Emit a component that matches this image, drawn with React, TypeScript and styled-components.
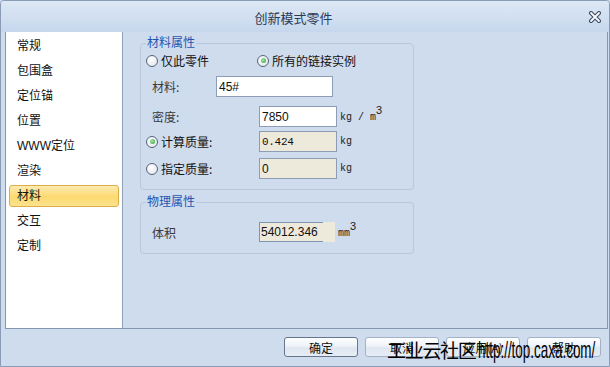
import React from "react";
import styled, { createGlobalStyle } from "styled-components";

const GlobalStyle = createGlobalStyle`
  html, body {
    margin: 0;
    padding: 0;
    background: #cfdcee;
  }
  body {
    font-family: "Noto Sans CJK SC", "Liberation Sans", sans-serif;
    font-size: 12px;
    color: #000;
  }
`;

const CJK = `"Noto Sans CJK SC", "Liberation Sans", sans-serif`;
const MONO = `"Liberation Mono", "Noto Sans CJK SC", monospace`;

const Window = styled.div`
  position: relative;
  width: 610px;
  height: 367px;
  box-sizing: border-box;
  border: 1px solid #8a9bb5;
  border-radius: 4px 4px 0 0;
  background: #cfdcee;
  overflow: hidden;
  display: flex;
  flex-direction: column;
`;

const TitleBar = styled.div`
  flex: none;
  height: 31px;
  display: flex;
  align-items: center;
  background: linear-gradient(#dde8f5, #c6d7ed);
`;

const Title = styled.div`
  flex: 1;
  text-align: center;
  font-family: ${CJK};
  font-size: 13px;
  color: #2b3a55;
  padding-top: 1px;
`;

const CloseButton = styled.div`
  flex: none;
  width: 18px;
  height: 18px;
  margin-right: 5px;
  display: flex;
  align-items: center;
  justify-content: center;
`;

const Content = styled.div`
  flex: none;
  height: 296px;
  margin: 0 1px 0 4px;
  display: flex;
  border: 1px solid #8496b2;
  border-top: none;
`;

const Sidebar = styled.ul`
  flex: none;
  width: 116px;
  margin: 0;
  padding: 3px 0 0;
  list-style: none;
  background: #fff;
  border-right: 1px solid #8e9fb7;
`;

const NavItem = styled.li<{ $active?: boolean }>`
  height: 22px;
  box-sizing: border-box;
  margin: 0 3px 3px;
  padding-left: 7px;
  line-height: 20px;
  font-family: "Liberation Sans", "Noto Sans CJK SC", sans-serif;
  font-size: 12px;
  color: #111;
  border-radius: 3px;
  border: 1px solid ${(p) => (p.$active ? "#dcae48" : "transparent")};
  background: ${(p) =>
    p.$active
      ? "linear-gradient(#fdeab0, #fcd96f 55%, #fde38f)"
      : "transparent"};
`;

const Main = styled.div`
  flex: 1;
  padding: 3px 0 0 17px;
`;

const Group = styled.fieldset<{ $top?: number; $bottom?: number }>`
  width: 274px;
  box-sizing: border-box;
  margin: ${(p) => p.$top ?? 0}px 0 0;
  padding: 0 5px ${(p) => p.$bottom ?? 10}px;
  min-width: 0;
  border: 1px solid #b7c7dd;
  border-radius: 4px;
`;

const Legend = styled.legend`
  padding: 0 1px 3px;
  line-height: 13px;
  font-family: ${CJK};
  font-size: 12px;
  color: #1f55b0;
`;

const Row = styled.div<{ $top?: number; $height?: number }>`
  display: flex;
  align-items: center;
  margin-top: ${(p) => p.$top ?? 0}px;
  height: ${(p) => p.$height ?? 21}px;
`;

const LabelCell = styled.div<{ $width: number; $indent?: boolean }>`
  flex: none;
  width: ${(p) => p.$width}px;
  box-sizing: border-box;
  padding-left: ${(p) => (p.$indent ? 6 : 0)}px;
  display: flex;
  align-items: center;
  font-family: ${CJK};
  font-size: 12px;
  color: ${(p) => (p.$indent ? "#3a3a3a" : "#111")};
`;

const Radio = styled.span<{ $checked?: boolean }>`
  flex: none;
  width: 12px;
  height: 12px;
  box-sizing: border-box;
  margin-right: 3px;
  border-radius: 50%;
  border: 1px solid #56657b;
  background: radial-gradient(circle at 40% 35%, #ffffff, #dde2ea);
  display: inline-flex;
  align-items: center;
  justify-content: center;

  &::after {
    content: "";
    display: ${(p) => (p.$checked ? "block" : "none")};
    width: 5px;
    height: 5px;
    border-radius: 50%;
    background: radial-gradient(circle at 40% 40%, #a6e8a2, #2f9d35);
  }
`;

const Field = styled.div<{ $width: number; $readonly?: boolean }>`
  flex: none;
  width: ${(p) => p.$width}px;
  height: 100%;
  box-sizing: border-box;
  padding-left: 2px;
  border: 1px solid #8d9db5;
  background: ${(p) => (p.$readonly ? "#eeeadb" : "#fff")};
  display: flex;
  align-items: center;
  font-family: "Liberation Sans", sans-serif;
  font-size: 12px;
  color: #111;
`;

const ReadValue = styled.span`
  font-family: ${MONO};
  font-size: 11px;
  letter-spacing: -0.3px;
`;

const VolumeField = styled.div`
  position: relative;
  flex: none;
  width: 76px;
  height: 100%;
  box-sizing: border-box;
  padding-left: 2px;
  background: #eeeadb;
  display: flex;
  align-items: center;
  font-family: "Liberation Sans", sans-serif;
  font-size: 12px;
  color: #111;

  &::before {
    content: "";
    position: absolute;
    left: 0;
    top: 0;
    bottom: 0;
    width: 63px;
    border: 1px solid #7f93b3;
    border-right: none;
  }
`;

const Unit = styled.span<{ $gap?: number }>`
  margin-left: ${(p) => p.$gap ?? 3}px;
  font-family: ${MONO};
  font-size: 10px;
  color: #222;
  white-space: pre;
`;

const Sup = styled.span`
  position: relative;
  top: -6px;
  font-size: 11px;
  font-family: "Liberation Sans", sans-serif;
`;

const Footer = styled.div`
  flex: 1;
  display: flex;
  justify-content: flex-end;
  align-items: flex-start;
  gap: 7px;
  padding: 8px 8px 0 0;
`;

const Button = styled.div<{ $primary?: boolean }>`
  width: 74px;
  height: 20px;
  box-sizing: border-box;
  border-radius: 3px;
  border: 1px solid ${(p) => (p.$primary ? "#66768e" : "#a4b1c4")};
  background: linear-gradient(#fdfeff, #eef2f8 45%, #dfe6f0 55%, #e7edf5);
  display: flex;
  align-items: center;
  justify-content: center;
  font-family: ${CJK};
  font-size: 12px;
  color: #111;
`;

const Watermark = styled.div`
  position: absolute;
  left: 386px;
  top: 338px;
  display: flex;
  align-items: baseline;
  white-space: nowrap;
  color: #000;
  pointer-events: none;
`;

const WmCjk = styled.span`
  font-family: ${CJK};
  font-size: 19px;
  line-height: 22px;
  letter-spacing: -1.3px;
`;

const WmUrl = styled.span`
  display: inline-block;
  margin-left: 2px;
  font-family: "Liberation Sans", sans-serif;
  font-size: 24px;
  line-height: 22px;
  transform: scaleX(0.56);
  transform-origin: left center;
`;

const navItems = ["常规", "包围盒", "定位锚", "位置", "WWW定位", "渲染", "材料", "交互", "定制"];

const CloseIcon = () => (
  <svg width="14" height="12" viewBox="0 0 14 12">
    <path d="M3 2 L11 10 M11 2 L3 10" stroke="#3d4b61" strokeWidth="4" strokeLinecap="round" />
    <path d="M3 2 L11 10 M11 2 L3 10" stroke="#fafcff" strokeWidth="1.8" strokeLinecap="round" />
  </svg>
);

export default function App() {
  return (
    <>
      <GlobalStyle />
      <Window>
        <TitleBar>
          <Title>创新模式零件</Title>
          <CloseButton>
            <CloseIcon />
          </CloseButton>
        </TitleBar>

        <Content>
          <Sidebar>
            {navItems.map((item) => (
              <NavItem key={item} $active={item === "材料"}>
                {item}
              </NavItem>
            ))}
          </Sidebar>

          <Main>
            <Group>
              <Legend>材料属性</Legend>
              <Row $height={19}>
                <LabelCell $width={111}>
                  <Radio />
                  仅此零件
                </LabelCell>
                <LabelCell $width={120}>
                  <Radio $checked />
                  所有的链接实例
                </LabelCell>
              </Row>
              <Row $top={6}>
                <LabelCell $width={70} $indent>
                  材料:
                </LabelCell>
                <Field $width={117}>45#</Field>
              </Row>
              <Row $top={9}>
                <LabelCell $width={113} $indent>
                  密度:
                </LabelCell>
                <Field $width={78}>7850</Field>
                <Unit>
                  kg / m<Sup>3</Sup>
                </Unit>
              </Row>
              <Row $top={4}>
                <LabelCell $width={113}>
                  <Radio $checked />
                  计算质量:
                </LabelCell>
                <Field $width={78} $readonly>
                  <ReadValue>0.424</ReadValue>
                </Field>
                <Unit>kg</Unit>
              </Row>
              <Row $top={6}>
                <LabelCell $width={113}>
                  <Radio />
                  指定质量:
                </LabelCell>
                <Field $width={78} $readonly>
                  0
                </Field>
                <Unit>kg</Unit>
              </Row>
            </Group>

            <Group $top={4} $bottom={11}>
              <Legend>物理属性</Legend>
              <Row $top={12} $height={20}>
                <LabelCell $width={113} $indent>
                  体积
                </LabelCell>
                <VolumeField>54012.346</VolumeField>
                <Unit $gap={3}>
                  mm<Sup>3</Sup>
                </Unit>
              </Row>
            </Group>
          </Main>
        </Content>

        <Footer>
          <Button $primary>确定</Button>
          <Button>取消</Button>
          <Button>应用(A)</Button>
          <Button>帮助</Button>
        </Footer>

        <Watermark>
          <WmCjk>工业云社区</WmCjk>
          <WmUrl>http://top.caxa.com/</WmUrl>
        </Watermark>
      </Window>
    </>
  );
}
